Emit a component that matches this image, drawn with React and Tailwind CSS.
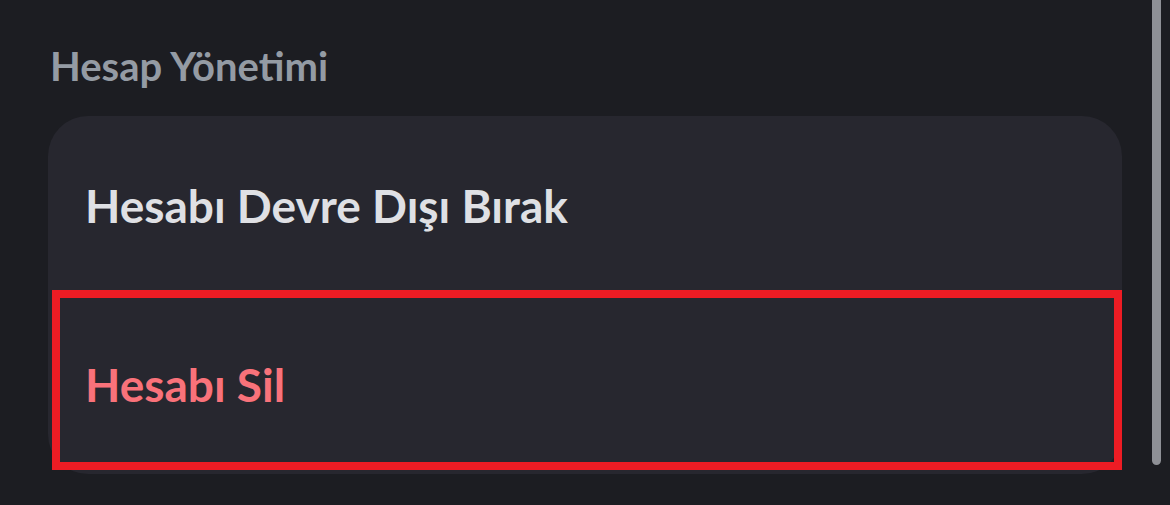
const rows = [
  { label: 'Hesabı Devre Dışı Bırak', danger: false },
  { label: 'Hesabı Sil', danger: true },
];

const App = () => {
  return (
    <div className="relative w-[1170px] h-[505px] bg-[#1c1d22] overflow-hidden" style={{ fontFamily: 'Lato, "Noto Sans", sans-serif' }}>
      <div className="pl-[48px] pr-[48px] pt-[40px]">
        <h2 className="pl-[2px] text-[40px] leading-[52px] font-bold text-[#949ba4]">Hesap Yönetimi</h2>
        <div className="mt-[24px] bg-[#27272f] rounded-[40px]">
          {rows.map((r) => (
            <div key={r.label} className="relative h-[179px] flex items-center pl-[37px]">
              <span className={`text-[46px] font-bold ${r.danger ? 'text-[#f9727a]' : 'text-[#dfe0e4]'}`}>{r.label}</span>
              {r.danger && (
                <div className="absolute left-[4px] right-0 top-[-5px] bottom-[4px] border-[8px] border-[#ed1c24]" />
              )}
            </div>
          ))}
        </div>
      </div>
      <div className="absolute left-[1152px] top-0 w-[9px] h-[465px] bg-[#8e9096] rounded-b-full" />
    </div>
  );
};

export default App;
